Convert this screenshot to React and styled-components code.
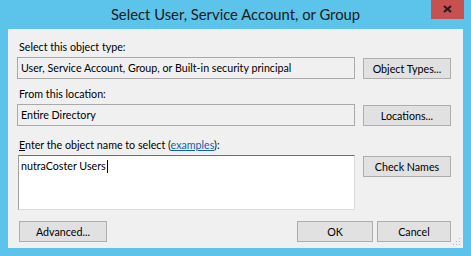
import React from 'react'
import styled, { createGlobalStyle } from 'styled-components'

const GlobalStyle = createGlobalStyle`
	html, body {
		margin: 0;
		padding: 0;
		background: #5cc3ea;
	}
	* {
		box-sizing: border-box;
	}
`

const App = () => {
	return (
		<>
			<GlobalStyle />
			<Window>
				<TitleBar>
					<span />
					<Title>Select User, Service Account, or Group</Title>
					<CloseButton>
						<svg width="9" height="8" viewBox="0 0 9 8">
							<path d="M1 1 L8 7 M8 1 L1 7" stroke="#2b1616" strokeWidth="2" />
						</svg>
					</CloseButton>
				</TitleBar>
				<Panel>
					<Label>Select this object type:</Label>
					<Row>
						<ReadOnlyField>User, Service Account, Group, or Built-in security principal</ReadOnlyField>
						<Button width={88}>Object Types...</Button>
					</Row>
					<Label top={7}>From this location:</Label>
					<Row>
						<ReadOnlyField>Entire Directory</ReadOnlyField>
						<Button width={88}>Locations...</Button>
					</Row>
					<Label top={11}>
						<u>E</u>nter the object name to select (<Link>examples</Link>):
					</Label>
					<Row align="flex-start">
						<NameBox>
							nutraCoster Users
							<Caret />
						</NameBox>
						<Button width={88} top={1}>Check Names</Button>
					</Row>
					<Footer>
						<Button width={88} left={2}>Advanced...</Button>
						<FooterRight>
							<Button width={76}>OK</Button>
							<Button width={74}>Cancel</Button>
						</FooterRight>
					</Footer>
					<Grip width="8" height="8" viewBox="0 0 8 8">
						<rect x="6" y="0" width="1" height="1" fill="#b8b8b8" />
						<rect x="3" y="3" width="1" height="1" fill="#b8b8b8" />
						<rect x="6" y="3" width="1" height="1" fill="#b8b8b8" />
						<rect x="0" y="6" width="1" height="1" fill="#b8b8b8" />
						<rect x="3" y="6" width="1" height="1" fill="#b8b8b8" />
						<rect x="6" y="6" width="1" height="1" fill="#b8b8b8" />
					</Grip>
				</Panel>
			</Window>
		</>
	)
}

export default App

const Window = styled.div`
	width: 471px;
	height: 256px;
	background: #5cc3ea;
	font-family: Lato, 'Liberation Sans', sans-serif;
	color: #000;
`

const TitleBar = styled.header`
	height: 29px;
	display: grid;
	grid-template-columns: 1fr auto 1fr;
	padding-right: 7px;
`

const Title = styled.span`
	font-size: 14.8px;
	line-height: 28px;
	color: #1a1a1a;
	padding-left: 7px;
	white-space: nowrap;
`

const CloseButton = styled.button`
	justify-self: end;
	align-self: start;
	width: 33px;
	height: 19px;
	padding: 0 0 2px;
	border: none;
	background: #c75050;
	display: flex;
	align-items: center;
	justify-content: center;
`

const Panel = styled.main`
	position: relative;
	margin: 0 8px;
	height: 219px;
	background: #f0f0f0;
	padding: 10px 12px 0 9px;
	font-size: 10.7px;
`

const Label = styled.div`
	height: 16px;
	line-height: 16px;
	margin: ${p => p.top || 0}px 0 2px 2px;
	white-space: nowrap;
	u {
		text-decoration: underline;
	}
`

const Link = styled.span`
	color: #0d5fb3;
	text-decoration: underline;
`

const Row = styled.div`
	display: flex;
	justify-content: space-between;
	align-items: ${p => p.align || 'center'};
`

const ReadOnlyField = styled.div`
	width: 338px;
	height: 22px;
	border: 1px solid #a9a9a9;
	background: #f0f0f0;
	padding-left: 3px;
	line-height: 20px;
	white-space: nowrap;
	overflow: hidden;
`

const NameBox = styled.div`
	width: 337px;
	height: 55px;
	margin-left: 1px;
	background: #fff;
	border-top: 1px solid #6e6e6e;
	border-left: 1px solid #a0a0a0;
	border-right: 1px solid #dcdcdc;
	border-bottom: 1px solid #dcdcdc;
	padding: 2px 2px;
	line-height: 16px;
`

const Caret = styled.span`
	display: inline-block;
	width: 1px;
	height: 13px;
	background: #000;
	vertical-align: -3px;
	margin-left: 1px;
`

const Button = styled.button`
	width: ${p => p.width}px;
	height: 21px;
	margin-top: ${p => p.top || 0}px;
	margin-left: ${p => p.left || 0}px;
	padding: 0;
	border: 1px solid #adadad;
	background: #e1e1e1;
	font-family: inherit;
	font-size: 10.7px;
	color: #000;
`

const Footer = styled.div`
	display: flex;
	justify-content: space-between;
	margin-top: 11px;
`

const FooterRight = styled.div`
	display: flex;
	gap: 4px;
`

const Grip = styled.svg`
	position: absolute;
	right: 2px;
	bottom: 2px;
`
